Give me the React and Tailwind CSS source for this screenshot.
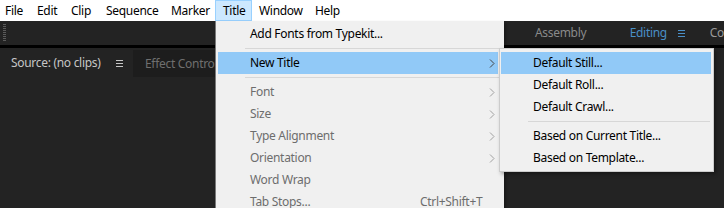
import React from 'react';

const menuBar = [
  { label: 'File', w: 'w-[32px]', pl: 'pl-[5px]' },
  { label: 'Edit', w: 'w-[34px]', pl: 'pl-[5px]' },
  { label: 'Clip', w: 'w-[35px]', pl: 'pl-[5px]' },
  { label: 'Sequence', w: 'w-[65px]', pl: 'pl-[5px]' },
  { label: 'Marker', w: 'w-[49px]', pl: 'pl-[5px]' },
  { label: 'Title', w: 'w-[37px]', pl: 'pl-[7px]', active: true },
  { label: 'Window', w: 'w-[58px]', pl: 'pl-[7px]' },
  { label: 'Help', w: 'w-[40px]', pl: 'pl-[5px]' },
];

const titleItems = [
  { label: 'Add Fonts from Typekit...' },
  { sep: true },
  { label: 'New Title', arrow: true, active: true },
  { sep: true },
  { label: 'Font', arrow: true, disabled: true },
  { label: 'Size', arrow: true, disabled: true },
  { label: 'Type Alignment', arrow: true, disabled: true },
  { label: 'Orientation', arrow: true, disabled: true },
  { label: 'Word Wrap', disabled: true },
  { label: 'Tab Stops...', disabled: true, shortcut: 'Ctrl+Shift+T' },
];

const newTitleItems = [
  { label: 'Default Still...', active: true },
  { label: 'Default Roll...' },
  { label: 'Default Crawl...' },
  { sep: true },
  { label: 'Based on Current Title...' },
  { label: 'Based on Template...' },
];

function Hamburger({ color }) {
  return (
    <svg width="7" height="8" viewBox="0 0 7 8">
      <path d="M0 1.5 H7 M0 4.5 H7 M0 7.5 H7" stroke={color} strokeWidth="1" />
    </svg>
  );
}

function Chevron({ disabled }) {
  return (
    <svg width="6" height="9" viewBox="0 0 6 9" className="absolute left-[271px] top-[7px]">
      <path d="M1 0.5 L5 4.5 L1 8.5" fill="none" stroke={disabled ? '#a0a0a0' : '#444'} strokeWidth="1" />
    </svg>
  );
}

function MenuRow({ item, inset, textLeft, sepLeft }) {
  if (item.sep) {
    return (
      <div className="h-[7px] flex items-center">
        <div className={`h-px bg-[#d7d7d7] flex-1 mr-[3px] ${sepLeft}`} />
      </div>
    );
  }
  return (
    <div
      className={`relative h-[22px] flex items-center ${inset} ${item.active ? 'bg-[#91c9f7]' : ''} ${
        item.disabled ? 'text-[#6d6d6d]' : 'text-black'
      }`}
    >
      <span className={textLeft}>{item.label}</span>
      {item.shortcut && <span className="absolute left-[202px] text-[#6d6d6d]">{item.shortcut}</span>}
      {item.arrow && <Chevron disabled={item.disabled} />}
    </div>
  );
}

export default function App() {
  return (
    <div className="relative w-[724px] h-[208px] overflow-hidden bg-[#232323] text-[12px] tracking-[-0.3px] font-['Noto_Sans',sans-serif] leading-none">
      {/* menu bar */}
      <div className="h-[21px] bg-white flex items-stretch">
        {menuBar.map((m) => (
          <div
            key={m.label}
            className={`${m.w} ${m.pl} flex items-center text-black ${
              m.active ? 'bg-[#cce8ff] border border-[#99d1ff]' : ''
            }`}
          >
            {m.label}
          </div>
        ))}
      </div>

      {/* workspace header */}
      <div className="h-[24px] bg-[#232323] flex items-center">
        <div className="ml-[3px] w-[3px] h-[18px] bg-[repeating-linear-gradient(to_bottom,#5a5a5a_0px,#5a5a5a_1px,transparent_1px,transparent_2px)]" />
        <span className="ml-[529px] w-[97px] text-[#8a8a8a]">Assembly</span>
        <span className="w-[50px] text-[#4a8fc7]">Editing</span>
        <span className="w-[31px] flex items-center">
          <Hamburger color="#4a8fc7" />
        </span>
        <span className="ml-[1px] text-[#9a9a9a] whitespace-nowrap">Co</span>
      </div>

      <div className="h-[3px] bg-black" />

      {/* panel tabs */}
      <div className="h-[30px] bg-[#232323] flex items-stretch">
        <div className="w-[133px] flex items-center pl-[11px] text-[#c6c6c6]">
          <span>Source: (no clips)</span>
          <span className="ml-[15px] flex items-center">
            <Hamburger color="#c6c6c6" />
          </span>
        </div>
        <div className="mt-[2px] mb-[1px] w-[120px] bg-[#1d1d1d] flex items-center pl-[12px] text-[#6f6f6f] whitespace-nowrap">
          Effect Controls
        </div>
      </div>

      {/* Title dropdown */}
      <div className="absolute left-[215px] top-[21px] w-[289px] h-[200px] bg-[#f0f0f0] border-l border-[#7a7a7a] pt-[2px] shadow-[2px_2px_3px_rgba(0,0,0,0.3)]">
        {titleItems.map((item, i) => (
          <MenuRow key={i} item={item} inset="mx-[2px] w-[280px]" textLeft="pl-[32px]" sepLeft="ml-[29px]" />
        ))}
      </div>

      {/* New Title submenu */}
      <div className="absolute left-[499px] top-[48px] w-[215px] h-[124px] bg-[#f0f0f0] border border-[#cccccc] pt-[3px] shadow-[2px_2px_4px_rgba(0,0,0,0.35)]">
        {newTitleItems.map((item, i) => (
          <MenuRow key={i} item={item} inset="mx-[1px] w-[210px]" textLeft="pl-[32px]" sepLeft="ml-[28px]" />
        ))}
      </div>
    </div>
  );
}
